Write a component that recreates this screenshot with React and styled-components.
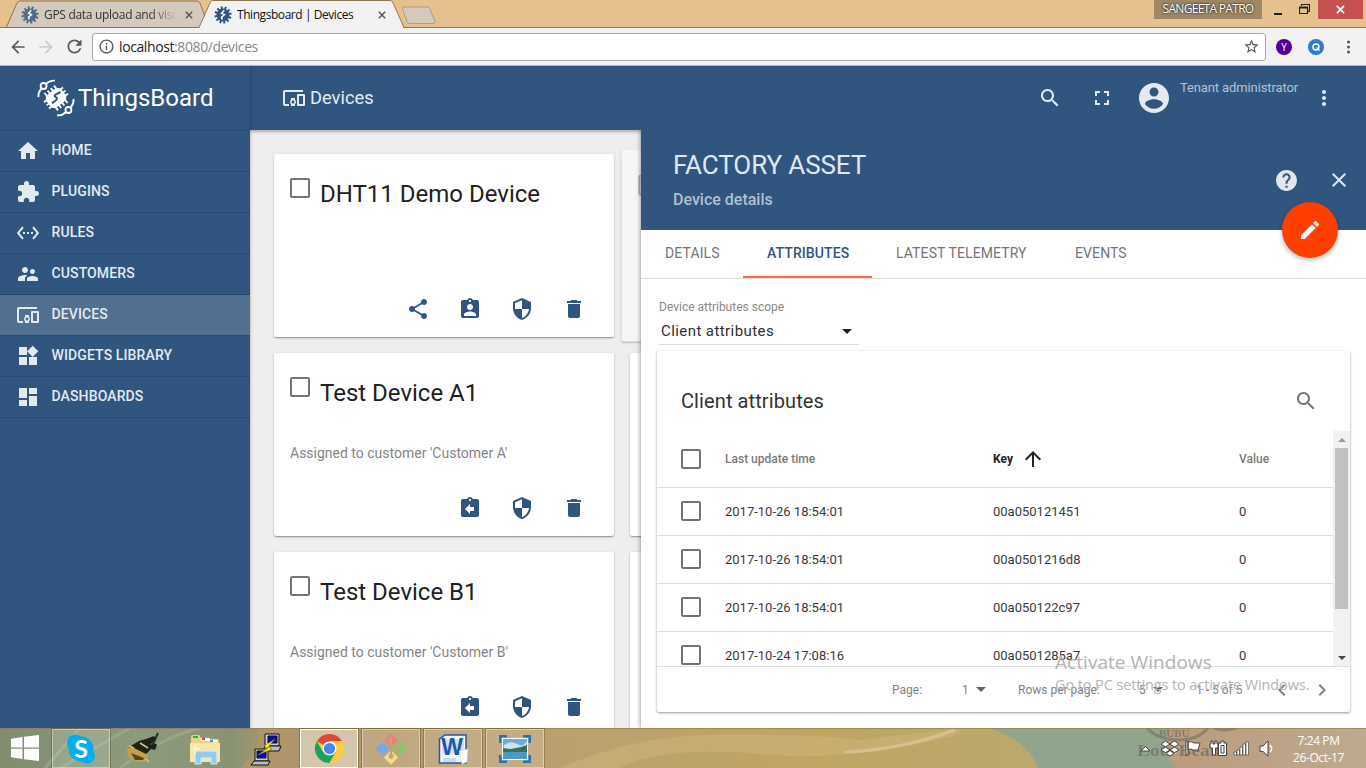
import React from 'react';
import styled, { createGlobalStyle } from 'styled-components';

const BLUE = '#305680';
const UI = '"Open Sans", "Noto Sans", sans-serif';

const GlobalStyle = createGlobalStyle`
  * { box-sizing: border-box; }
  html, body { margin: 0; padding: 0; overflow: hidden; }
  body { font-family: Roboto, "Liberation Sans", sans-serif; }
  svg { display: block; flex: none; }
`;

/* ---------- icons ---------- */
const PATHS = {
  home: 'M10 20v-6h4v6h5v-8h3L12 3 2 12h3v8z',
  plugin: 'M20.5 11H19V7c0-1.1-.9-2-2-2h-4V3.5C13 2.12 11.88 1 10.5 1S8 2.12 8 3.5V5H4c-1.1 0-1.99.9-1.99 2v3.8H3.5c1.49 0 2.7 1.21 2.7 2.7s-1.21 2.7-2.7 2.7H2V20c0 1.1.9 2 2 2h3.8v-1.5c0-1.49 1.21-2.7 2.7-2.7 1.49 0 2.7 1.21 2.7 2.7V22H17c1.1 0 2-.9 2-2v-4h1.5c1.38 0 2.5-1.12 2.5-2.5S21.88 11 20.5 11z',
  rules: 'M7.77 6.76L6.23 5.48.82 12l5.41 6.52 1.54-1.28L3.42 12l4.35-5.24zM7 13h2v-2H7v2zm10-2h-2v2h2v-2zm-6 2h2v-2h-2v2zm6.77-7.52l-1.54 1.28L20.58 12l-4.35 5.24 1.54 1.28L23.18 12l-5.41-6.52z',
  customers: 'M16.5 12c1.38 0 2.49-1.12 2.49-2.5S17.88 7 16.5 7C15.12 7 14 8.12 14 9.5s1.12 2.5 2.5 2.5zM9 11c1.66 0 2.99-1.34 2.99-3S10.66 5 9 5C7.34 5 6 6.34 6 8s1.34 3 3 3zm7.5 3c-1.83 0-5.5.92-5.5 2.75V19h11v-2.25c0-1.83-3.67-2.75-5.5-2.75zM9 13c-2.33 0-7 1.17-7 3.5V19h7v-2.25c0-.85.33-2.34 2.37-3.47C10.5 13.1 9.66 13 9 13z',
  devices: 'M3 6h18V4H3c-1.1 0-2 .9-2 2v12c0 1.1.9 2 2 2h4v-2H3V6zm10 6H9v1.78c-.61.55-1 1.33-1 2.22s.39 1.67 1 2.22V20h4v-1.78c.61-.55 1-1.34 1-2.22s-.39-1.67-1-2.22V12zm-2 5.5c-.83 0-1.5-.67-1.5-1.5s.67-1.5 1.5-1.5 1.5.67 1.5 1.5-.67 1.5-1.5 1.5zM22 8h-6c-.5 0-1 .5-1 1v10c0 .5.5 1 1 1h6c.5 0 1-.5 1-1V9c0-.5-.5-1-1-1zm-1 10h-4v-8h4v8z',
  widgets: 'M13 13v8h8v-8h-8zM3 21h8v-8H3v8zM3 3v8h8V3H3zm13.66-1.31L11 7.34 16.66 13l5.66-5.66-5.66-5.65z',
  dashboards: 'M3 13h8V3H3v10zm0 8h8v-6H3v6zm10 0h8V11h-8v10zm0-18v6h8V3h-8z',
  share: 'M18 16.08c-.76 0-1.44.3-1.96.77L8.91 12.7c.05-.23.09-.46.09-.7s-.04-.47-.09-.7l7.05-4.11c.54.5 1.25.81 2.04.81 1.66 0 3-1.34 3-3s-1.34-3-3-3-3 1.34-3 3c0 .24.04.47.09.7L8.04 9.81C7.5 9.31 6.79 9 6 9c-1.66 0-3 1.34-3 3s1.34 3 3 3c.79 0 1.5-.31 2.04-.81l7.12 4.16c-.05.21-.08.43-.08.65 0 1.61 1.31 2.92 2.92 2.92 1.61 0 2.92-1.31 2.92-2.92s-1.31-2.92-2.92-2.92z',
  assign: 'M19 3h-4.18C14.4 1.84 13.3 1 12 1c-1.3 0-2.4.84-2.82 2H5c-1.1 0-2 .9-2 2v14c0 1.1.9 2 2 2h14c1.1 0 2-.9 2-2V5c0-1.1-.9-2-2-2zm-7 0c.55 0 1 .45 1 1s-.45 1-1 1-1-.45-1-1 .45-1 1-1zm0 4c1.66 0 3 1.34 3 3s-1.34 3-3 3-3-1.34-3-3 1.34-3 3-3zm6 12H6v-1.4c0-2 4-3.1 6-3.1s6 1.1 6 3.1V19z',
  unassign: 'M19 3h-4.18C14.4 1.84 13.3 1 12 1c-1.3 0-2.4.84-2.82 2H5c-1.1 0-2 .9-2 2v14c0 1.1.9 2 2 2h14c1.1 0 2-.9 2-2V5c0-1.1-.9-2-2-2zm-7 0c.55 0 1 .45 1 1s-.45 1-1 1-1-.45-1-1 .45-1 1-1zm4 12h-4v3l-5-5 5-5v3h4v4z',
  security: 'M12 1L3 5v6c0 5.55 3.84 10.74 9 12 5.16-1.26 9-6.45 9-12V5l-9-4zm0 10.99h7c-.53 4.12-3.28 7.79-7 8.94V12H5V6.3l7-3.11v8.8z',
  remove: 'M6 19c0 1.1.9 2 2 2h8c1.1 0 2-.9 2-2V7H6v12zM19 4h-3.5l-1-1h-5l-1 1H5v2h14V4z',
  search: 'M15.5 14h-.79l-.28-.27C15.41 12.59 16 11.11 16 9.5 16 5.91 13.09 3 9.5 3S3 5.91 3 9.5 5.91 16 9.5 16c1.61 0 3.09-.59 4.23-1.57l.27.28v.79l5 4.99L20.49 19l-4.99-5zm-6 0C7.01 14 5 11.99 5 9.5S7.01 5 9.5 5 14 7.01 14 9.5 11.99 14 9.5 14z',
  fullscreen: 'M7 14H5v5h5v-2H7v-3zm-2-4h2V7h3V5H5v5zm12 7h-3v2h5v-5h-2v3zM14 5v2h3v3h2V5h-5z',
  account: 'M12 2C6.48 2 2 6.48 2 12s4.48 10 10 10 10-4.48 10-10S17.52 2 12 2zm0 3c1.66 0 3 1.34 3 3s-1.34 3-3 3-3-1.34-3-3 1.34-3 3-3zm0 14.2c-2.5 0-4.71-1.28-6-3.22.03-1.99 4-3.08 6-3.08 1.99 0 5.97 1.09 6 3.08-1.29 1.94-3.5 3.22-6 3.22z',
  more: 'M12 8c1.1 0 2-.9 2-2s-.9-2-2-2-2 .9-2 2 .9 2 2 2zm0 2c-1.1 0-2 .9-2 2s.9 2 2 2 2-.9 2-2-.9-2-2-2zm0 6c-1.1 0-2 .9-2 2s.9 2 2 2 2-.9 2-2-.9-2-2-2z',
  help: 'M12 2C6.48 2 2 6.48 2 12s4.48 10 10 10 10-4.48 10-10S17.52 2 12 2zm1 17h-2v-2h2v2zm2.07-7.75l-.9.92C13.45 12.9 13 13.5 13 15h-2v-.5c0-1.1.45-2.1 1.17-2.83l1.24-1.26c.37-.36.59-.86.59-1.41 0-1.1-.9-2-2-2s-2 .9-2 2H8c0-2.21 1.79-4 4-4s4 1.79 4 4c0 .88-.36 1.68-.93 2.25z',
  close: 'M19 6.41L17.59 5 12 10.59 6.41 5 5 6.41 10.59 12 5 17.59 6.41 19 12 13.41 17.59 19 19 17.59 13.41 12z',
  edit: 'M3 17.25V21h3.75L17.81 9.94l-3.75-3.75L3 17.25zM20.71 7.04c.39-.39.39-1.02 0-1.41l-2.34-2.34c-.39-.39-1.02-.39-1.41 0l-1.83 1.83 3.75 3.75 1.83-1.83z',
  up: 'M4 12l1.41 1.41L11 7.83V20h2V7.83l5.58 5.59L20 12l-8-8-8 8z',
  left: 'M15.41 7.41L14 6l-6 6 6 6 1.41-1.41L10.83 12z',
  right: 'M10 6L8.59 7.41 13.17 12l-4.58 4.59L10 18l6-6z',
  back: 'M20 11H7.83l5.59-5.59L12 4l-8 8 8 8 1.41-1.41L7.83 13H20v-2z',
  forward: 'M12 4l-1.41 1.41L16.17 11H4v2h12.17l-5.58 5.59L12 20l8-8z',
  refresh: 'M17.65 6.35C16.2 4.9 14.21 4 12 4c-4.42 0-7.99 3.58-7.99 8s3.57 8 7.99 8c3.73 0 6.84-2.55 7.73-6h-2.08c-.82 2.33-3.04 4-5.65 4-3.31 0-6-2.69-6-6s2.69-6 6-6c1.66 0 3.14.69 4.22 1.78L13 11h7V4l-2.35 2.35z',
  info: 'M11 17h2v-6h-2v6zm1-15C6.48 2 2 6.48 2 12s4.48 10 10 10 10-4.48 10-10S17.52 2 12 2zm0 18c-4.41 0-8-3.59-8-8s3.59-8 8-8 8 3.59 8 8-3.59 8-8 8zM11 9h2V7h-2v2z',
  star: 'M22 9.24l-7.19-.62L12 2 9.19 8.63 2 9.24l5.46 4.73L5.82 21 12 17.27 18.18 21l-1.63-7.03L22 9.24zM12 15.4l-3.76 2.27 1-4.28-3.32-2.88 4.38-.38L12 6.1l1.71 4.04 4.38.38-3.32 2.88 1 4.28L12 15.4z',
};

const Icon = ({ name, size = 24, color = 'currentColor' }) => (
  <svg width={size} height={size} viewBox="0 0 24 24" fill={color}><path d={PATHS[name]} /></svg>
);

const Gear = ({ size = 18, opacity = 1 }) => (
  <svg width={size} height={size} viewBox="-10 -10 20 20" opacity={opacity}>
    <g transform="rotate(20)">
      {[0, 30, 60, 90, 120, 150, 180, 210, 240, 270, 300, 330].map((a) => (
        <rect key={a} x="-1.1" y="-9.6" width="2.2" height="4" fill={BLUE} transform={`rotate(${a})`} />
      ))}
    </g>
    <circle r="7.2" fill={BLUE} />
    <path d="M1.400-5.200L-1.600-2 1.600-.4-1.600 2.400-1 5" fill="none" stroke="#fff" strokeWidth="1.700" />
  </svg>
);

const LogoMark = () => (
  <svg width="38" height="38" viewBox="-19 -19 38 38">
    <g transform="rotate(-38)">
      <rect x="-9.5" y="-7.8" width="19" height="15.6" rx="5" fill="#fff" />
      {[-6, -2, 2, 6].map((x) => (
        <path key={x} d={`M${x}-11V11`} stroke="#fff" strokeWidth="1.8" />
      ))}
      {[-4, 0, 4].map((y) => (
        <path key={y} d={`M-12 ${y}H12`} stroke="#fff" strokeWidth="1.8" />
      ))}
    </g>
    <path d="M4.500-6L-.5-3.400Q-2.500-2 0-.8T-1 3L-4 5.400" fill="none" stroke={BLUE} strokeWidth="2" />
    <g fill="none" stroke="#fff" strokeWidth="1.8">
      <circle cx="-12.400" cy="-12" r="3" />
      <circle cx="12.400" cy="12" r="3" />
      <path d="M-10-14.200C-7-16.800-3-17.600-1-17.400M-14.600-9.600C-17.200-6.400-17.800-3-17.600-1" />
      <path d="M10 14.200C7 16.800 3 17.600 1 17.400M14.600 9.600C17.200 6.400 17.800 3 17.600 1" />
    </g>
  </svg>
);

/* ---------- browser chrome ---------- */
const Screen = styled.div`
  width: 1366px; height: 768px; display: flex; flex-direction: column; overflow: hidden; background: #fff;
`;
const TabStrip = styled.div`
  position: relative; height: 28px; flex: none; background: #e6c18e; border-bottom: 1px solid #8c7450;
  display: flex; align-items: flex-start;
`;
const TabShapes = styled.svg` position: absolute; left: 0; top: 0; `;
const BrowserTab = styled.div`
  position: relative; height: 29px; display: flex; align-items: center; gap: 5px; flex: none;
  width: ${(p) => p.$w}px; padding-left: ${(p) => p.$pad}px;
  font: 12px/15px ${UI}; color: ${(p) => (p.$active ? '#111' : '#333')};
`;
const TabTitle = styled.span`
  width: ${(p) => p.$w}px; overflow: hidden; white-space: nowrap; letter-spacing: ${(p) => p.$ls}px;
  ${(p) => p.$fade && 'mask-image: linear-gradient(90deg, #000 80%, transparent);'}
`;
const TabClose = styled.span` display: flex; margin-left: ${(p) => p.$ml}px; `;
const WindowControls = styled.div`
  position: relative; margin-left: auto; margin-right: 3px; display: flex; height: 19px; align-items: stretch;
`;
const UserTag = styled.div`
  width: 108px; background: #a08763; color: #fff; font: 12px/18px ${UI}; text-align: center;
  letter-spacing: -0.7px; white-space: nowrap; text-shadow: 0 0 2px #222, 0 0 2px #333;
`;
const WinButton = styled.div`
  width: ${(p) => p.$w}px; padding-right: ${(p) => p.$pr || 0}px; display: flex; align-items: center; justify-content: center;
  background: ${(p) => (p.$close ? '#c75050' : 'transparent')};
`;
const AddressBar = styled.div`
  height: 38px; flex: none; background: #f2f2f2; border-bottom: 1px solid #b6b4b6; display: flex; align-items: center;
  padding: 0 8px; color: #5a5a5a;
`;
const NavGlyph = styled.span` display: flex; width: 28px; opacity: ${(p) => (p.$off ? 0.25 : 1)}; `;
const UrlBox = styled.div`
  width: 1174px; height: 28px; background: #fff; border: 1px solid #a9a9a9; border-radius: 3px;
  display: flex; align-items: center; padding: 0 5px; gap: 4px;
`;
const Url = styled.span`
  font: 14px/20px ${UI}; letter-spacing: -0.4px; color: #888; flex: 1; white-space: nowrap;
  b { font-weight: 400; color: #222; }
`;
const ExtBadge = styled.span`
  width: 16px; height: 16px; border-radius: 50%; background: ${(p) => p.$bg}; color: #fff;
  font: 10px/16px ${UI}; text-align: center; margin-left: ${(p) => p.$ml}px;
  display: flex; align-items: center; justify-content: center;
`;
const MenuDots = styled.span` display: flex; margin-left: 14px; color: #555; `;

/* ---------- application ---------- */
const AppFrame = styled.div` display: flex; height: 662px; flex: none; overflow: hidden; `;
const Sidebar = styled.nav`
  width: 250px; flex: none; background: ${BLUE}; position: relative; z-index: 2; box-shadow: 0 1px 3px rgba(0,0,0,.35);
`;
const Brand = styled.div`
  height: 64px; display: flex; align-items: center; padding: 0 0 1px 37px; gap: 3px; color: #fff;
  font-size: 24px; white-space: nowrap; letter-spacing: -.02px;
`;
const NavItem = styled.div`
  height: 41px; border-top: 1px solid #284a70; display: flex; align-items: center; gap: 12px; padding-left: 16px;
  background: ${(p) => (p.$active ? '#516f91' : 'transparent')}; color: #e4e9f0;
  font-size: 14px; font-weight: 500; white-space: nowrap;
  &:last-child { height: 42px; border-bottom: 1px solid #284a70; }
`;
const NavLabel = styled.span` margin: -2px 0 0 -.5px; letter-spacing: .12px; `;
const Main = styled.div` flex: 1; position: relative; display: flex; flex-direction: column; min-width: 0; `;
const TopBar = styled.header`
  height: 64px; flex: none; background: ${BLUE}; color: #e4e9f0; display: flex; align-items: center;
  padding: 0 30px 0 32px; box-shadow: 0 1px 4px rgba(0,0,0,.4); z-index: 1;
`;
const PageTitle = styled.div`
  flex: 1; display: flex; align-items: center; gap: 4px; font-size: 18.3px;
  span { margin-top: -2px; }
`;
const TopAction = styled.span` display: flex; margin-right: ${(p) => p.$mr}px; `;
const Role = styled.span`
  font-size: 13px; color: #b3c2d3; width: 132px; align-self: flex-start; padding-top: 14px; white-space: nowrap; letter-spacing: -.12px;
`;
const Board = styled.div`
  flex: 1; background: #eee; padding: 24px; display: grid; overflow: hidden;
  grid-template-columns: 340px 340px; grid-auto-rows: 183px; gap: 16px; align-content: start;
`;
const DeviceCard = styled.article`
  background: #fff; border-radius: 2px; padding: 24px 28px 16px 16px; display: flex; flex-direction: column;
  box-shadow: 0 1px 3px rgba(0,0,0,.2), 0 1px 1px rgba(0,0,0,.14), 0 2px 1px -1px rgba(0,0,0,.12);
  ${(p) => p.$hover && 'transform: scale(1.05); opacity: .5;'}
`;
const CardHead = styled.div`
  display: flex; gap: 10px; font-size: 24px; line-height: 32px; color: #212121; height: 60px; white-space: nowrap;
`;
const Check = styled.span`
  width: 20px; height: 20px; border: 2px solid #757575; border-radius: 2px; flex: none; background: #fff;
  margin-bottom: ${(p) => (p.$lift ? 2 : 0)}px;
`;
const CardNote = styled.div` font-size: 14px; line-height: 20px; color: #858585; flex: 1; padding-top: 6px; white-space: nowrap; `;
const CardActions = styled.div` display: flex; justify-content: flex-end; gap: 28px; color: ${BLUE}; height: 24px; `;

const Details = styled.section`
  position: absolute; left: 391px; right: 0; top: 64px; bottom: 0; background: #fff; z-index: 3;
  display: flex; flex-direction: column;
`;
const DetailsBackdrop = styled.div`
  position: absolute; left: 391px; right: 0; top: 64px; bottom: 0; box-shadow: -1px 0 4px rgba(0,0,0,.35);
`;
const DetailsHead = styled.div`
  height: 100px; flex: none; background: ${BLUE}; display: flex; align-items: center; padding: 0 15px 0 32px; color: #e2e7ee;
`;
const DetailsTitles = styled.div` flex: 1; padding-bottom: 2px; `;
const DetailsTitle = styled.div` font-size: 26px; line-height: 32px; letter-spacing: -0.1px; `;
const DetailsSub = styled.div` font-size: 16px; line-height: 20px; margin-top: 9px; color: #b0c0d1; font-weight: 500; `;
const HeadAction = styled.span` display: flex; margin-left: ${(p) => p.$ml || 0}px; `;
const Fab = styled.button`
  position: absolute; right: 28px; top: 72px; width: 56px; height: 56px; border: 0; border-radius: 50%;
  background: #ff3f00; color: #fff; display: flex; align-items: center; justify-content: center;
  box-shadow: 0 2px 5px rgba(0,0,0,.3);
`;
const Tabs = styled.div` height: 49px; flex: none; border-bottom: 1px solid #dedede; display: flex; `;
const Tab = styled.div`
  height: 48px; width: ${(p) => p.$w}px; padding-left: 24px; line-height: 47px; font-size: 14px; white-space: nowrap;
  color: ${(p) => (p.$active ? BLUE : '#757575')}; font-weight: ${(p) => (p.$active ? 500 : 400)};
  border-bottom: 2px solid ${(p) => (p.$active ? '#ff6c40' : 'transparent')};
  letter-spacing: .1px;
`;
const Scope = styled.div` width: 200px; margin: 19px 0 0 18px; height: 47px; border-bottom: 1px solid #dcdcdc; flex: none; `;
const ScopeLabel = styled.div` font-size: 12px; line-height: 18px; color: #8a8a8a; `;
const ScopeValue = styled.div`
  display: flex; align-items: center; justify-content: space-between; padding: 0 7px 0 2px;
  font-size: 15px; line-height: 31px; color: #303030; letter-spacing: .42px;
`;
const Caret = styled.span`
  width: 0; height: 0; border: 5px solid transparent; border-top-color: ${(p) => p.$c || '#222'}; border-bottom: 0;
  margin: ${(p) => (p.$ml ? 0 : -1)}px 0 0 ${(p) => p.$ml || 0}px;
`;
const TableCard = styled.div`
  width: 693px; height: 361px; margin: 6px 0 0 16px; background: #fff; border-radius: 2px; flex: none;
  box-shadow: 0 1px 3px rgba(0,0,0,.25), 0 1px 2px rgba(0,0,0,.2); display: flex; flex-direction: column;
`;
const TableTitle = styled.div`
  height: 80px; padding: 20px 32px 0 24px; display: flex; align-items: center; justify-content: space-between;
  font-size: 20px; color: #333; letter-spacing: .1px; flex: none;
  svg { color: #757575; }
`;
const TableArea = styled.div` height: 235px; display: flex; overflow: hidden; flex: none; `;
const Rows = styled.div` flex: 1; `;
const Row = styled.div`
  display: grid; grid-template-columns: 44px 268px 246px 1fr; align-items: center; padding-left: 24px;
  height: ${(p) => (p.$head ? 57 : 48)}px; border-bottom: 1px solid #dedede; white-space: nowrap;
  font-size: ${(p) => (p.$head ? 12 : 13)}px; font-weight: ${(p) => (p.$head ? 500 : 400)};
  color: ${(p) => (p.$head ? '#7a7a7a' : '#3a3a3a')};
`;
const KeyHead = styled.span` display: flex; align-items: center; gap: 8px; color: #222; font-weight: 700; `;
const Scrollbar = styled.div` width: 17px; background: #f1f1f1; display: flex; flex-direction: column; align-items: center; `;
const ScrollArrow = styled.span`
  height: 17px; display: flex; align-items: center;
  &::before {
    content: ''; border: 4px solid transparent;
    ${(p) => (p.$down ? 'border-top-color: #444; border-bottom: 0;' : 'border-bottom-color: #9a9a9a; border-top: 0;')}
  }
`;
const Thumb = styled.span` width: 13px; height: 161px; background: #c1c1c1; margin-bottom: auto; `;
const Pager = styled.div`
  flex: 1; border-top: 1px solid #dedede; display: grid; align-items: center; padding-left: 235px;
  grid-template-columns: 70px 56px 121px 57px 74px 40px 1fr; font-size: 12px; color: #828282; white-space: nowrap;
`;
const PagerPick = styled.span` display: flex; align-items: center; `;

const Watermark = styled.div`
  position: absolute; left: 1055px; top: 650px; font-family: ${UI}; color: #b4b4b4; white-space: nowrap; z-index: 10;
`;
const WatermarkTitle = styled.div` font-size: 19px; line-height: 25px; letter-spacing: .05px; `;
const WatermarkText = styled.div` font-size: 14.5px; line-height: 20px; letter-spacing: -.1px; `;

/* ---------- taskbar ---------- */
const Taskbar = styled.footer` position: relative; height: 40px; display: flex; overflow: hidden; flex: none; `;
const Wallpaper = styled.svg` position: absolute; left: 0; top: 0; `;
const Start = styled.div` position: relative; width: 50px; display: flex; align-items: center; justify-content: center; padding-bottom: 1px; `;
const TaskSlot = styled.div`
  position: relative; width: 58px; height: 39px; margin: 1px 2px 0; display: flex; align-items: center; justify-content: center;
  ${(p) => p.$open && `border: 1px solid rgba(255,255,255,.4); background: rgba(255,255,255,.16); outline: 1px solid rgba(70,50,20,.3);`}
  ${(p) => p.$focus && `border: 1px solid rgba(255,255,255,.9); background: rgba(255,255,255,.45);`}
`;
const Tray = styled.div` position: relative; margin-left: auto; display: flex; align-items: center; padding-right: 20px; `;
const TrayIcons = styled.svg` margin: 2px 15px 0 0; `;
const Clock = styled.div`
  font: 12px/17px ${UI}; color: #fff; text-align: center; letter-spacing: -.4px; width: 55px; white-space: nowrap; padding-top: 2px;
`;

const X = ({ size = 8, color = '#555', w = 1.8 }) => (
  <svg width={size} height={size} viewBox="0 0 10 10"><path d="M1 1L9 9M9 1L1 9" stroke={color} strokeWidth={w} /></svg>
);

const NAV = [
  ['home', 'HOME'], ['plugin', 'PLUGINS'], ['rules', 'RULES'], ['customers', 'CUSTOMERS'],
  ['devices', 'DEVICES'], ['widgets', 'WIDGETS LIBRARY'], ['dashboards', 'DASHBOARDS'],
];
const DEVICES = [
  { title: 'DHT11 Demo Device', note: '', actions: ['share', 'assign', 'security', 'remove'] },
  { title: 'Test Device A1', note: "Assigned to customer 'Customer A'", actions: ['unassign', 'security', 'remove'] },
  { title: 'Test Device B1', note: "Assigned to customer 'Customer B'", actions: ['unassign', 'security', 'remove'] },
];
const ATTRS = [
  ['2017-10-26 18:54:01', '00a050121451', '0'],
  ['2017-10-26 18:54:01', '00a0501216d8', '0'],
  ['2017-10-26 18:54:01', '00a050122c97', '0'],
  ['2017-10-24 17:08:16', '00a0501285a7', '0'],
];

const Browser = () => (
  <>
    <TabStrip>
      <TabShapes width="460" height="28">
        <path d="M6 28L17 3Q18 1 20 1H196Q199 1 200 3L209 28Z" fill="#d3c9bc" stroke="#8c7450" />
        <path d="M402.500 9Q402 7 404 7H427Q429 7 430 9L435 21.500Q435.500 23.500 433 23.500H410Q408 23.500 407 21.500Z" fill="#d3c9bc" stroke="#b09c7d" />
        <path d="M0 27.500H199L210 3Q211 .5 213 .5H390Q392 .5 393 3L404 27.500H460" fill="none" stroke="#8c7450" />
        <path d="M199.500 28L210.500 3Q211.500 1 213 1H390Q391.500 1 392.500 3L403.500 28Z" fill="#f2f2f2" />
      </TabShapes>
      <BrowserTab $w={199} $pad={21}>
        <Gear opacity={0.8} />
        <TabTitle $w={133} $ls={-0.3} $fade>GPS data upload and visualization</TabTitle>
        <TabClose $ml={3}><X /></TabClose>
      </BrowserTab>
      <BrowserTab $w={205} $pad={15} $active>
        <Gear />
        <TabTitle $w={133} $ls={-0.44}>Thingsboard | Devices</TabTitle>
        <TabClose $ml={3}><X /></TabClose>
      </BrowserTab>
      <WindowControls>
        <UserTag>SANGEETA PATRO</UserTag>
        <WinButton $w={32}><svg width="8" height="12"><rect y="9" width="8" height="2" fill="#222" /></svg></WinButton>
        <WinButton $w={24} $pr={4}>
          <svg width="11" height="11" fill="none" stroke="#222"><path d="M.5 3H8.500V9.500H.5ZM.5 4H8.500M2.500 2V.5H10.500V7.500H9" strokeWidth="1.200" /></svg>
        </WinButton>
        <WinButton $w={45} $close><X size={9} color="#fff" w={1.9} /></WinButton>
      </WindowControls>
    </TabStrip>
    <AddressBar>
      <NavGlyph><Icon name="back" size={20} /></NavGlyph>
      <NavGlyph $off><Icon name="forward" size={20} /></NavGlyph>
      <NavGlyph><Icon name="refresh" size={21} /></NavGlyph>
      <UrlBox>
        <Icon name="info" size={17} />
        <Url><b>localhost</b>:8080/devices</Url>
        <Icon name="star" size={17} />
      </UrlBox>
      <ExtBadge $bg="#520099" $ml={10}>Y</ExtBadge>
      <ExtBadge $bg="#2b7bd0" $ml={16}>
        <svg width="10" height="10" fill="none" stroke="#fff" strokeWidth="1.400"><circle cx="5" cy="5" r="3" /><path d="M5.500 5.500L8.500 8.500" /></svg>
      </ExtBadge>
      <MenuDots>
        <svg width="20" height="16" fill="#555"><circle cx="10.500" cy="3" r="1.500" /><circle cx="10.500" cy="8" r="1.500" /><circle cx="10.500" cy="13" r="1.500" /></svg>
      </MenuDots>
    </AddressBar>
  </>
);

const DetailsPanel = () => (
  <Details>
    <DetailsHead>
      <DetailsTitles>
        <DetailsTitle>FACTORY ASSET</DetailsTitle>
        <DetailsSub>Device details</DetailsSub>
      </DetailsTitles>
      <HeadAction><Icon name="help" size={25} /></HeadAction>
      <HeadAction $ml={28}><Icon name="close" size={24} /></HeadAction>
    </DetailsHead>
    <Fab><Icon name="edit" /></Fab>
    <Tabs>
      <Tab $w={102}>DETAILS</Tab>
      <Tab $w={129} $active>ATTRIBUTES</Tab>
      <Tab $w={179}>LATEST TELEMETRY</Tab>
      <Tab $w={100}>EVENTS</Tab>
    </Tabs>
    <Scope>
      <ScopeLabel>Device attributes scope</ScopeLabel>
      <ScopeValue>Client attributes<Caret /></ScopeValue>
    </Scope>
    <TableCard>
      <TableTitle>Client attributes<Icon name="search" /></TableTitle>
      <TableArea>
        <Rows>
          <Row $head>
            <Check /><span>Last update time</span><KeyHead>Key<Icon name="up" /></KeyHead><span>Value</span>
          </Row>
          {ATTRS.map(([time, key, value]) => (
            <Row key={key}><Check $lift /><span>{time}</span><span>{key}</span><span>{value}</span></Row>
          ))}
        </Rows>
        <Scrollbar><ScrollArrow /><Thumb /><ScrollArrow $down /></Scrollbar>
      </TableArea>
      <Pager>
        <span>Page:</span>
        <PagerPick>1<Caret $ml={7} $c="#666" /></PagerPick>
        <span>Rows per page:</span>
        <PagerPick>5<Caret $ml={7} $c="#666" /></PagerPick>
        <span>1 - 5 of 5</span>
        <Icon name="left" />
        <Icon name="right" />
      </Pager>
    </TableCard>
  </Details>
);

const TaskWallpaper = () => (
  <Wallpaper width="1366" height="40" preserveAspectRatio="none">
    <defs>
      <linearGradient id="tb">
        <stop offset="0" stopColor="#7f8d6d" /><stop offset=".1" stopColor="#8c9b7d" /><stop offset=".17" stopColor="#899374" />
        <stop offset=".2" stopColor="#ad9868" /><stop offset=".3" stopColor="#b49869" /><stop offset=".42" stopColor="#bba16f" />
        <stop offset=".6" stopColor="#c0a562" /><stop offset=".73" stopColor="#bba86c" />
      </linearGradient>
      <linearGradient id="pink"><stop offset="0" stopColor="#bb9b7c" /><stop offset="1" stopColor="#bdaa90" /></linearGradient>
    </defs>
    <rect width="1366" height="40" fill="url(#tb)" />
    <path d="M45 40L80 0M60 40L130 0M120 40Q160 10 200 0" stroke="#a6b394" strokeWidth="3" fill="none" opacity=".5" />
    <path d="M240 40Q262 20 258 0H300V40Z" fill="#ae956a" />
    <path d="M560 40Q640 4 740 6T860 12L960 0V6Q860 34 760 26T620 40Z" fill="#cfb67c" opacity=".5" />
    <path d="M845 24Q900 22 955 2" stroke="#d9c596" strokeWidth="3" fill="none" opacity=".8" />
    <path d="M988 0H1180L1176 40H1038Q1028 12 988 0Z" fill="#91a58d" />
    <path d="M1170 0H1366V40H1176Q1160 20 1170 0Z" fill="url(#pink)" />
    <g fill="none" stroke="#7e776a" strokeWidth="3" opacity=".7">
      <path d="M1147 0Q1158 12 1178 12T1208 0" /><path d="M1214 0Q1225 4 1236 0" />
    </g>
    <g fill="#746f65" opacity=".75" fontFamily="Liberation Serif, serif" fontWeight="700">
      <text x="1159" y="9" fontSize="11">BUBU</text>
      <text x="1137" y="28" fontSize="17" textLength="91" lengthAdjust="spacingAndGlyphs">Lots Beans</text>
    </g>
    <path d="M0 .5H1366" stroke="#8f794b" strokeWidth="1" opacity=".6" />
  </Wallpaper>
);

const TaskIcons = {
  skype: (
    <svg width="32" height="32" viewBox="0 0 32 32">
      <circle cx="16" cy="16" r="12.5" fill="#00aff0" /><circle cx="10" cy="9.500" r="8" fill="#00aff0" /><circle cx="22" cy="22.500" r="8" fill="#00aff0" />
      <text x="16" y="24.500" fontSize="25" fontWeight="700" fill="#fff" textAnchor="middle" fontFamily="Lato, sans-serif">S</text>
    </svg>
  ),
  serial: (
    <svg width="34" height="34" viewBox="0 0 34 34">
      <path d="M32 1L26 14" stroke="#2b2d24" strokeWidth="2" />
      <path d="M13 9L20 7 28 4 30 7 24 13Q30 10 31 13L29 18 25 17 19 23 11 26 3 15Z" fill="#1f211a" />
      <path d="M1 17L6 15 22 23 21 30 10 30 2 25Z" fill="#c2a148" /><path d="M5 21L18 26 17 28 9 28Z" fill="#544823" />
      <path d="M3 14L8 16M20 27L23 30M14 11L22 16" stroke="#d9c77c" strokeWidth="1.500" />
    </svg>
  ),
  explorer: (
    <svg width="34" height="32" viewBox="0 0 34 32">
      <path d="M3 4Q3 2 5 2H11L13 5H20L22 6H29Q31 6 31 8V28H3Z" fill="#efd384" /><path d="M5 3H10V5H5Z" fill="#2eae47" />
      <path d="M13 5H22V8H13Z" fill="#fff" /><path d="M14 5H17V7H14Z" fill="#d6413a" /><path d="M22 7H29V9H22Z" fill="#fff" /><path d="M22 7H25V9H22Z" fill="#2b97dd" />
      <path d="M2 10H32V29H2Z" fill="#f8e6a6" /><path d="M7 31V21Q7 18 10 18H26Q29 18 29 21V31H23V25H13V31Z" fill="#93cbed" stroke="#d9effb" />
      <path d="M2 16H12M7 11V21" stroke="#fff" opacity=".8" />
    </svg>
  ),
  putty: (
    <svg width="34" height="34" viewBox="0 0 34 34" stroke="#111">
      <path d="M15 2H29V14H15Z" fill="#ccc" /><path d="M18 4H27V11H18Z" fill="#0808c8" /><path d="M15 14H31L29 19H13Z" fill="#bbb" />
      <path d="M5 17H18V29H5Z" fill="#ccc" /><path d="M7 19H16V26H7Z" fill="#0808c8" /><path d="M4 29H20L18 33H1Z" fill="#bbb" />
      <path d="M25 7L14 14 18 16 8 23 22 17 18 15Z" fill="#ff0" stroke="#886f00" strokeWidth=".6" />
    </svg>
  ),
  chrome: (
    <svg width="31" height="31" viewBox="-16 -16 32 32">
      <circle r="15" fill="#fbcb42" />
      <path d="M0 0L-13-7.500A15 15 0 0 1 13-7.500H0Z" fill="#dc4a3d" />
      <path d="M-13-7.500A15 15 0 0 0 0 15L6.500 3.750 0 0-6.500 3.750Z" fill="#1ba15f" /><path d="M0-7.500H13A15 15 0 0 1 0 15L6.500 3.750Z" fill="#fbcb42" />
      <circle r="7.200" fill="#fff" /><circle r="5.800" fill="#4688f1" />
    </svg>
  ),
  git: (
    <svg width="34" height="34" viewBox="-17 -17 34 34" strokeLinecap="round">
      <g transform="rotate(45)"><path d="M-11-11H-1V-1H-11Z" fill="#f77b78" /><path d="M1-11H11V-1H1Z" fill="#7fcb63" />
        <path d="M-11 1H-1V11H-11Z" fill="#78a7ee" /><path d="M1 1H11V11H1Z" fill="#fade7e" /></g>
      <path d="M0-12V9M0-4L7 1M-4-9L0-5" stroke="#bfa47a" strokeWidth="2" fill="none" /><g fill="#bfa47a"><circle cy="7" r="2.500" /><circle cx="7" cy="1" r="2.500" /><circle cy="-3" r="2.500" /></g>
    </svg>
  ),
  word: (
    <svg width="32" height="32" viewBox="0 0 32 32">
      <path d="M2.500 6L8 2H29V30H2.500Z" fill="#f4f8fd" stroke="#2a579a" strokeWidth="1.500" /><path d="M5 6H27V21H5Z" fill="#d4e4f7" />
      <text x="15" y="22" fontSize="23" fontWeight="700" fill="#1d56ad" textAnchor="middle" fontFamily="Liberation Sans, sans-serif">W</text>
      <path d="M22 18L31 16 30 29 25 31Z" fill="#fff" stroke="#bccde2" strokeWidth=".7" /><path d="M6 26H19M6 28H19" stroke="#a5bddd" />
    </svg>
  ),
  photo: (
    <svg width="32" height="28" viewBox="0 0 32 28">
      <path d="M1 8V1H8M24 1H31V8M31 20V27H24M8 27H1V20" stroke="#2475b5" strokeWidth="3" fill="none" />
      <path d="M3 3H29V25H3Z" fill="#fff" /><path d="M4 4H28V24H4Z" fill="#6cabdd" /><path d="M5 10Q12 5 18 9T28 6V15H4Z" fill="#cce3f3" />
      <path d="M4 13L12 14 22 12 28 10V18H4Z" fill="#3c7055" /><path d="M4 17H28V24H4Z" fill="#4c9ac5" />
    </svg>
  ),
};

const SystemTray = () => (
  <Tray>
    <TrayIcons width="137" height="22" viewBox="0 0 137 22" fill="#fff" stroke="#444" strokeWidth="1">
      <path d="M2 13L6.500 8.500 11 13Z" />
      <path d="M26.500 3L31 6 26.500 9 22 6ZM35.500 3L40 6 35.500 9 31 6ZM26.500 9L31 12 26.500 14.500 22 12ZM35.500 9L40 12 35.500 14.500 31 12ZM31 12.500L35 15.500 31 18 27 15.500Z" />
      <path d="M47 3H49V17H47ZM49 4Q53 3 55 5H61L59 12H54Q52 10 49 12Z" />
      <path d="M72 3H74V6H76V3H78V6H79V10H76.500V17H73.500V10H71V6H72Z" />
      <path d="M79.500 5H82V3H85V5H87.500V17.500H79.500Z" /><path d="M82 7.500H85V15H82Z" />
      <path d="M95 14H97.500V17H95ZM98 12H100.500V17H98ZM101 9H103.500V17H101ZM104 6H106.500V17H104ZM107 4H109.500V17H107Z" strokeWidth=".7" />
      <path d="M121 8H124L129 3V18L124 13.500H121Z" /><path d="M131 7Q134.500 10.500 131 14" fill="none" stroke="#fff" strokeWidth="1.500" />
    </TrayIcons>
    <Clock><div>7:24 PM</div><div>26-Oct-17</div></Clock>
  </Tray>
);

export default function App() {
  return (
    <Screen>
      <GlobalStyle />
      <Browser />
      <AppFrame>
        <Sidebar>
          <Brand><LogoMark />ThingsBoard</Brand>
          {NAV.map(([icon, label]) => (
            <NavItem key={label} $active={label === 'DEVICES'}><Icon name={icon} /><NavLabel>{label}</NavLabel></NavItem>
          ))}
        </Sidebar>
        <Main>
          <TopBar>
            <PageTitle><Icon name="devices" /><span>Devices</span></PageTitle>
            <TopAction $mr={28}><Icon name="search" /></TopAction>
            <TopAction $mr={22}><Icon name="fullscreen" /></TopAction>
            <TopAction $mr={8}><Icon name="account" size={36} /></TopAction>
            <Role>Tenant administrator</Role>
            <TopAction $mr={0}><Icon name="more" /></TopAction>
          </TopBar>
          <Board>
            {DEVICES.map((d, i) => (
              <React.Fragment key={d.title}>
                <DeviceCard>
                  <CardHead><Check /><span>{d.title}</span></CardHead>
                  <CardNote>{d.note}</CardNote>
                  <CardActions>{d.actions.map((a) => <Icon key={a} name={a} />)}</CardActions>
                </DeviceCard>
                <DeviceCard $hover={i === 0}>{i === 0 && <CardHead><Check /></CardHead>}</DeviceCard>
              </React.Fragment>
            ))}
          </Board>
          <DetailsBackdrop />
          <DetailsPanel />
        </Main>
      </AppFrame>
      <Taskbar>
        <TaskWallpaper />
        <Start>
          <svg width="28" height="26" viewBox="0 0 28 26" fill="#fff"><path d="M0 3.800L11.500 2V12.400H0ZM13 1.800L28 0V12.400H13ZM0 13.700H11.500V24L0 22.300ZM13 13.700H28V26L13 24.200Z" /></svg>
        </Start>
        <TaskSlot $open>{TaskIcons.skype}</TaskSlot>
        <TaskSlot>{TaskIcons.serial}</TaskSlot>
        <TaskSlot>{TaskIcons.explorer}</TaskSlot>
        <TaskSlot>{TaskIcons.putty}</TaskSlot>
        <TaskSlot $open $focus>{TaskIcons.chrome}</TaskSlot>
        <TaskSlot $open>{TaskIcons.git}</TaskSlot>
        <TaskSlot $open>{TaskIcons.word}</TaskSlot>
        <TaskSlot $open>{TaskIcons.photo}</TaskSlot>
        <SystemTray />
      </Taskbar>
      <Watermark>
        <WatermarkTitle>Activate Windows</WatermarkTitle>
        <WatermarkText>Go to PC settings to activate Windows.</WatermarkText>
      </Watermark>
    </Screen>
  );
}
